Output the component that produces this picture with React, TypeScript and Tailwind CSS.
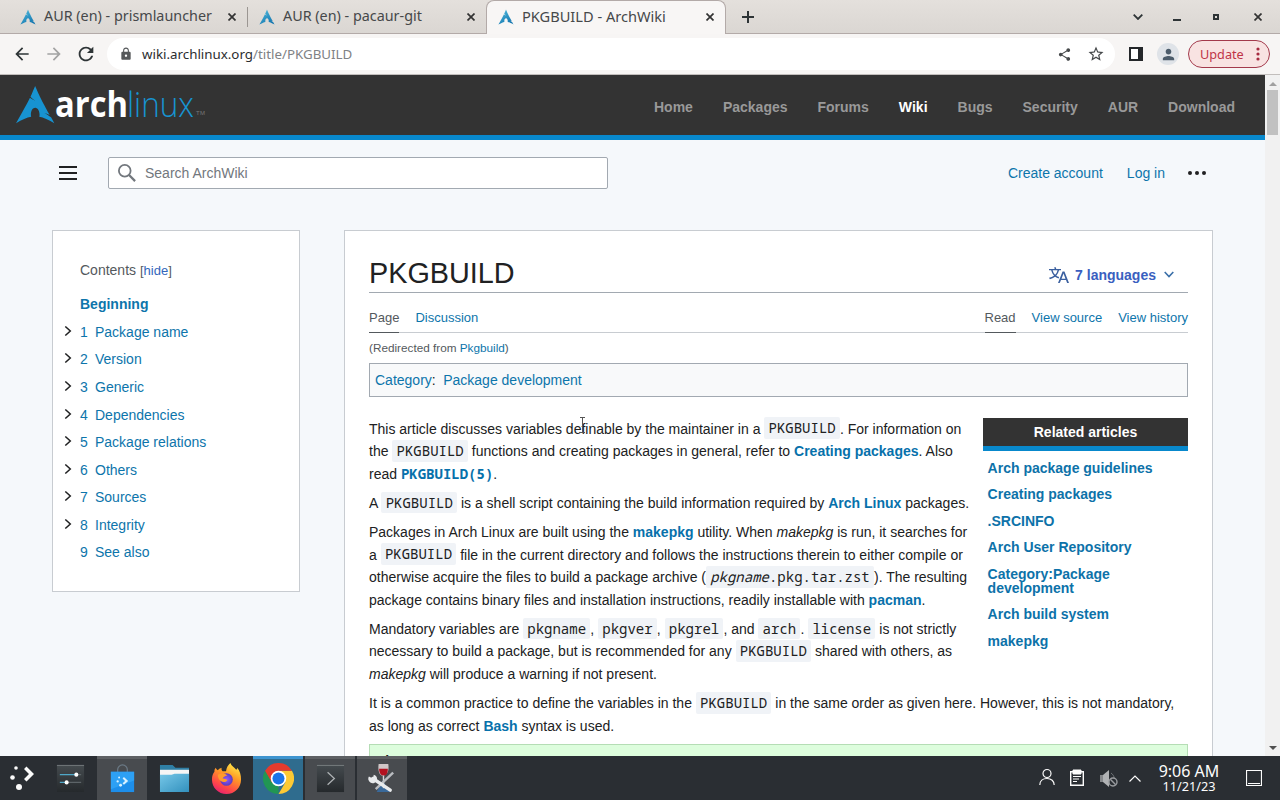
import type { ReactNode } from 'react';
import { MdArrowBack, MdArrowForward, MdLock, MdPerson, MdRefresh, MdShare, MdStarBorder } from 'react-icons/md';

const ARCH_MARK =
  'M11.39.605C10.376 3.092 9.764 4.72 8.635 7.132c.693.734 1.543 1.589 2.923 2.554-1.484-.61-2.496-1.224-3.252-1.86C6.86 10.842 4.596 15.138 0 23.395c3.612-2.085 6.412-3.37 9.021-3.862a6.61 6.61 0 01-.171-1.547l.003-.115c.058-2.315 1.261-4.095 2.687-3.973 1.426.12 2.534 2.096 2.478 4.409a6.52 6.52 0 01-.146 1.243c2.58.505 5.352 1.787 8.914 3.844-.702-1.293-1.33-2.459-1.929-3.57-.943-.73-1.926-1.682-3.933-2.713 1.38.359 2.367.772 3.137 1.234-6.09-11.334-6.582-12.84-8.67-17.74z';

const navItems = ['Home', 'Packages', 'Forums', 'Wiki', 'Bugs', 'Security', 'AUR', 'Download'];

const tocItems = [
  { title: 'Package name', expandable: true },
  { title: 'Version', expandable: true },
  { title: 'Generic', expandable: true },
  { title: 'Dependencies', expandable: true },
  { title: 'Package relations', expandable: true },
  { title: 'Others', expandable: true },
  { title: 'Sources', expandable: true },
  { title: 'Integrity', expandable: true },
  { title: 'See also', expandable: false },
];

const relatedArticles = [
  'Arch package guidelines',
  'Creating packages',
  '.SRCINFO',
  'Arch User Repository',
  'Category:Package development',
  'Arch build system',
  'makepkg',
];

function Favicon() {
  return (
    <svg viewBox="0 0 22.8 24" className="h-4 w-4 shrink-0">
      <defs>
        <linearGradient id="fav" x1="0" y1="0" x2="0.6" y2="1">
          <stop offset="0" stopColor="#55c0e0" />
          <stop offset="1" stopColor="#1577b0" />
        </linearGradient>
      </defs>
      <path d={ARCH_MARK} fill="url(#fav)" />
    </svg>
  );
}

function CloseIcon() {
  return (
    <svg viewBox="0 0 8 8" className="h-2 w-2 shrink-0">
      <path d="M.5.5l7 7M7.5.5l-7 7" stroke="#333" strokeWidth="1.7" fill="none" />
    </svg>
  );
}

function Tab({ title, active }: { title: string; active?: boolean }) {
  return (
    <>
      <Favicon />
      <span
        className={`mb-0.5 flex-1 whitespace-nowrap leading-5 text-[#46484a] ${active ? 'ml-2 text-[14.6px]' : 'ml-2 text-[14.35px]'}`}
      >
        {title}
      </span>
      <CloseIcon />
    </>
  );
}

function TabStrip() {
  return (
    <div className="flex h-[34px] shrink-0 bg-linear-to-b from-[#e4e0dc] to-[#dad6d2]">
      <div className="flex h-[34px] w-[247px] items-center border-b border-[#b3aaa8] pl-5 pr-[11px]">
        <Tab title="AUR (en) - prismlauncher" />
      </div>
      <div className="flex h-[34px] w-[239px] items-center border-b border-[#b3aaa8] pr-[11px]">
        <div className="mr-[11px] h-5 w-px bg-[#9b9692]" />
        <Tab title="AUR (en) - pacaur-git" />
      </div>
      <div className="flex h-[34px] w-[240px] items-center rounded-t-lg border border-b-0 border-[#b3aaa8] bg-[#f8f6f5] pb-px pl-[11px] pr-[11px]">
        <Tab title="PKGBUILD - ArchWiki" active />
      </div>
      <div className="flex h-[34px] flex-1 items-center border-b border-[#b3aaa8] pl-4 pr-[18px]">
        <svg viewBox="0 0 12 12" className="h-3 w-3">
          <path d="M6 0v12M0 6h12" stroke="#2e3436" strokeWidth="2" />
        </svg>
        <div className="flex-1" />
        <svg viewBox="0 0 10 6" className="h-1.5 w-2.5">
          <path d="M.7.7L5 5 9.3.7" stroke="#2e3436" strokeWidth="1.8" fill="none" />
        </svg>
        <div className="ml-[30px] mt-[6px] h-0.5 w-2 bg-[#2e3436]" />
        <div className="ml-8 h-1.5 w-1.5 border-2 border-[#2e3436]" />
        <div className="ml-[35px] flex">
          <CloseIcon />
        </div>
      </div>
    </div>
  );
}

function Toolbar() {
  return (
    <div className="flex h-[41px] shrink-0 items-center border-b border-[#c2bebc] bg-[#f7f5f4] pl-3 pr-[10px]">
      <MdArrowBack className="h-5 w-5 text-[#2e3436]" />
      <MdArrowForward className="ml-3 h-5 w-5 text-[#a3a3a3]" />
      <MdRefresh className="ml-[11px] h-[22px] w-[22px] text-[#2e3436]" />
      <div className="ml-[10px] flex h-8 w-[1008px] items-center rounded-full bg-white pl-[12px] pr-[10px]">
        <MdLock className="h-[14px] w-[14px] text-[#55585a]" />
        <span className="ml-[9px] flex-1 text-[13.33px] leading-5 text-[#808285]">
          <span className="text-[#2b2d2f]">wiki.archlinux.org</span>/title/PKGBUILD
        </span>
        <MdShare className="h-[15px] w-[15px] text-[#45484a]" />
        <MdStarBorder className="ml-[15px] h-[18px] w-[18px] text-[#45484a]" />
      </div>
      <svg viewBox="0 0 14 14" className="ml-[14px] h-[14px] w-[14px]">
        <path d="M1 1h12v12H1z" fill="#fff" stroke="#24272a" strokeWidth="2" />
        <path d="M9 0h5v14H9z" fill="#24272a" />
      </svg>
      <div className="ml-[14px] flex h-[22px] w-[22px] items-center justify-center rounded-full bg-[#dfe3e8]">
        <MdPerson className="h-[17px] w-[17px] text-[#4c5c6b]" />
      </div>
      <div className="ml-[9px] flex h-7 w-[82px] items-center rounded-full border border-[#a33a4c] bg-[#f8e3e2] pl-[11px] pr-[9px] text-[#bf3447]">
        <span className="flex-1 text-[12.7px] leading-5">Update</span>
        <svg viewBox="0 0 4 14" className="h-[14px] w-1 fill-[#a62a40]">
          <circle cx="2" cy="2" r="1.6" />
          <circle cx="2" cy="7" r="1.6" />
          <circle cx="2" cy="12" r="1.6" />
        </svg>
      </div>
    </div>
  );
}

function ArchLogo() {
  return (
    <svg viewBox="0 0 192 42" className="h-[42px] w-[192px] overflow-visible">
      <path d={ARCH_MARK} fill="#1793d1" transform="translate(0 1) scale(1.68 1.63)" />
      <g fontFamily="Open Sans, sans-serif" fontSize="35">
        <text x="39" y="32.5" fill="#fff" fontWeight="700" textLength="73" lengthAdjust="spacingAndGlyphs">arch</text>
        <text x="111" y="32.5" fill="#1793d1" fontWeight="300" textLength="67" lengthAdjust="spacingAndGlyphs">linux</text>
      </g>
      <text x="180" y="31" fill="#777" fontSize="6" fontFamily="Liberation Sans, sans-serif" textLength="9">TM</text>
    </svg>
  );
}

function ArchNavbar() {
  return (
    <div className="flex h-[65px] shrink-0 items-center border-b-5 border-[#0888cc] bg-[#333] pl-4 pr-[30px]">
      <ArchLogo />
      <nav className="ml-auto mt-1 flex gap-[30px] text-sm font-bold text-[#999]">
        {navItems.map((item) => (
          <a key={item} className={item === 'Wiki' ? 'text-white' : ''}>
            {item}
          </a>
        ))}
      </nav>
    </div>
  );
}

function WikiHeader() {
  return (
    <div className="mt-[17px] flex h-8 items-center pl-[59px] pr-[59px]">
      <div className="flex w-[18px] flex-col gap-1">
        <div className="h-0.5 bg-[#202122]" />
        <div className="h-0.5 bg-[#202122]" />
        <div className="h-0.5 bg-[#202122]" />
      </div>
      <div className="ml-[31px] flex h-8 w-[500px] items-center rounded-xs border border-[#a2a9b1] bg-white pl-[9px]">
        <svg viewBox="0 0 20 20" className="h-[18px] w-[18px]" fill="none" stroke="#72777d" strokeWidth="2">
          <circle cx="7.5" cy="7.5" r="6.5" />
          <path d="M12 12l7 7" strokeWidth="2.5" />
        </svg>
        <span className="ml-[9px] text-sm text-[#72777d]">Search ArchWiki</span>
      </div>
      <div className="ml-auto flex items-center text-sm text-[#0d75ab]">
        <a>Create account</a>
        <a className="ml-6">Log in</a>
        <svg viewBox="0 0 18 4" className="ml-[23px] h-1 w-[18px] fill-[#202122]">
          <circle cx="2" cy="2" r="2" />
          <circle cx="9" cy="2" r="2" />
          <circle cx="16" cy="2" r="2" />
        </svg>
      </div>
    </div>
  );
}

function Contents() {
  return (
    <aside className="h-[362px] w-[248px] shrink-0 border border-[#c8ccd1] bg-white pl-[11px] pt-[29px] text-sm text-[#0d75ab]">
      <div className="pl-4 text-[#54595d]">
        Contents <span className="text-[13px]">[<span className="text-[#3366bb]">hide</span>]</span>
      </div>
      <div className="mt-[13px] pl-4 font-bold leading-[21px]">Beginning</div>
      <ul className="mt-[3.5px]">
        {tocItems.map((item, i) => (
          <li key={item.title} className="flex h-[27.57px] items-center">
            <svg viewBox="0 0 8 10" className="mb-[2px] mr-2 h-2.5 w-2">
              {item.expandable && <path d="M1.3.5L6.300 5l-5 4.500" fill="none" stroke="#202122" strokeWidth="1.5" />}
            </svg>
            <span className="w-[15px]">{i + 1}</span>
            {item.title}
          </li>
        ))}
      </ul>
    </aside>
  );
}

function Code({ children }: { children: ReactNode }) {
  return (
    <code className="rounded-xs bg-[#f0f3f7] px-[4.2px] py-[1.4px] font-['Noto_Sans_Mono','DejaVu_Sans_Mono',monospace] text-[14px] leading-none">
      {children}
    </code>
  );
}

function Link({ children }: { children: ReactNode }) {
  return <a className="font-bold text-[#0771ab]">{children}</a>;
}

function RelatedArticles() {
  return (
    <div className="float-right ml-[10px] w-[205px] text-sm">
      <div className="h-[33px] border-b-5 border-[#0888cc] bg-[#333] text-center font-bold leading-7 text-white">
        Related articles
      </div>
      <ul className="flex flex-col gap-[12.55px] pl-[4.6px] pt-[9.9px] font-bold leading-[14px] text-[#0d72a9]">
        {relatedArticles.map((article) => (
          <li key={article}>{article}</li>
        ))}
      </ul>
    </div>
  );
}

function Article() {
  return (
    <main className="ml-11 h-[600px] w-[869px] shrink-0 border border-[#c8ccd1] bg-white px-6 pt-6 text-[#202122]">
      <div className="flex h-[38px] items-center border-b border-[#a2a9b1]">
        <h1 className="mb-0.5 text-[28.8px] leading-9">PKGBUILD</h1>
        <div className="ml-auto mr-[14px] mt-[3px] flex items-center text-sm font-bold text-[#3a5fc0]">
          <svg viewBox="0 0 20 20" className="mb-px mr-1.5 h-5 w-5 fill-[#3a5f9f]">
            <path d="M20 18h-1.440a.61.61 0 0 1-.4-.12.81.81 0 0 1-.23-.31L17 15h-5l-1 2.540a.77.77 0 0 1-.22.3.59.59 0 0 1-.4.14H9l4.550-11.470h1.890zm-3.530-4.310L14.890 9.500a11.620 11.620 0 0 1-.39-1.240q-.09.37-.19.69l-.19.56-1.580 4.190zm-6.300-1.580a13.430 13.430 0 0 1-2.910-1.410 11.460 11.460 0 0 0 2.810-5.370H12V4H7.310a4 4 0 0 0-.2-.56C6.870 2.790 6.600 2 6.600 2l-1.470.5s.4.89.6 1.500H0v1.330h2.150A11.230 11.230 0 0 0 5 10.700a17.190 17.190 0 0 1-5 2.100q.56.82.87 1.380a23.280 23.280 0 0 0 5.220-2.510 15.640 15.640 0 0 0 3.560 1.770zM3.630 5.330h4.910a8.110 8.110 0 0 1-2.450 4.450 9.110 9.110 0 0 1-2.460-4.450z" />
          </svg>
          7 languages
          <svg viewBox="0 0 10 7" className="mb-0.5 ml-2 h-[7px] w-2.5">
            <path d="M.7 1L5 5.500 9.300 1" fill="none" stroke="#3a6fa8" strokeWidth="1.600" />
          </svg>
        </div>
      </div>

      <div className="flex h-10 gap-4 border-b border-[#c8ccd1] text-[13px] leading-[49px] text-[#0d75ab]">
        <a className="h-10 border-b border-[#54595d] text-[#54595d]">Page</a>
        <a>Discussion</a>
        <a className="ml-auto h-10 border-b border-[#54595d] text-[#54595d]">Read</a>
        <a>View source</a>
        <a>View history</a>
      </div>
      <div className="mt-[6px] text-[11.76px] leading-[17px] text-[#54595d]">
        (Redirected from <a className="text-[#0d75ab]">Pkgbuild</a>)
      </div>
      <div className="mt-[7px] h-[34px] border border-[#a2a9b1] bg-[#f8f9fa] pl-[5px] text-sm leading-8">
        <a className="text-[#0d75ab]">Category</a>:<a className="ml-[7.5px] text-[#0d75ab]">Package development</a>
      </div>

      <div className="mt-[20.8px] text-sm leading-[22.4px]">
        <RelatedArticles />
        <p>
          This article discusses variables definable by the maintainer in a <Code>PKGBUILD</Code>. For information on the{' '}
          <Code>PKGBUILD</Code> functions and creating packages in general, refer to <Link>Creating packages</Link>. Also
          read <span className="font-['Noto_Sans_Mono','DejaVu_Sans_Mono',monospace] leading-none"><Link>PKGBUILD(5)</Link></span>.
        </p>
        <p className="mt-[7px]">
          A <Code>PKGBUILD</Code> is a shell script containing the build information required by <Link>Arch Linux</Link> packages.
        </p>
        <p className="mt-[7px]">
          Packages in Arch Linux are built using the <Link>makepkg</Link> utility. When <i>makepkg</i> is run, it searches for
          a <Code>PKGBUILD</Code> file in the current directory and follows the instructions therein to either compile or
          otherwise acquire the files to build a package archive (<Code><i>pkgname</i>.pkg.tar.zst</Code>). The resulting
          package contains binary files and installation instructions, readily installable with <Link>pacman</Link>.
        </p>
        <p className="mt-[7px]">
          Mandatory variables are <Code>pkgname</Code>, <Code>pkgver</Code>, <Code>pkgrel</Code>, and <Code>arch</Code>.{' '}
          <Code>license</Code> is not strictly necessary to build a package, but is recommended for any{' '}
          <Code>PKGBUILD</Code> shared with others, as <i>makepkg</i> will produce a warning if not present.
        </p>
        <p className="mt-[7px]">
          It is a common practice to define the variables in the <Code>PKGBUILD</Code> in the same order as given here.
          However, this is not mandatory, as long as correct <Link>Bash</Link> syntax is used.
        </p>
        <div className="mt-[7px] h-20 border border-[#b5ddb5] bg-[#ddfddd] px-[7px] pt-[5px] font-bold">Tip:</div>
      </div>
    </main>
  );
}

function Scrollbar() {
  return (
    <div className="flex w-[15px] shrink-0 flex-col items-center bg-[#f1f1f1]">
      <svg viewBox="0 0 8 4" className="mt-[7px] h-1 w-2">
        <path d="M0 4l4-4 4 4z" fill="#a0a0a0" />
      </svg>
      <div className="mt-1 h-[45px] w-[11px] bg-[#c1c1c1]" />
      <svg viewBox="0 0 8 4" className="mb-[6px] mt-auto h-1 w-2">
        <path d="M0 0l4 4 4-4z" fill="#505050" />
      </svg>
    </div>
  );
}

function TaskButton({ state, children }: { state?: 'open' | 'active'; children: ReactNode }) {
  const tone =
    state === 'active'
      ? 'border-t-3 border-[#3d94cf] bg-[#2f6c8e]'
      : state === 'open'
        ? 'border-t-3 border-[#5d6063] bg-[#484b4f]'
        : 'border-t-3 border-transparent';
  return (
    <div className={`mx-px flex h-11 w-[50px] items-center justify-center pb-[5px] ${tone}`}>
      <svg viewBox="0 0 32 32" className="mt-[3px] h-[31px] w-[31px]">
        {children}
      </svg>
    </div>
  );
}

function Taskbar() {
  return (
    <div className="flex h-11 shrink-0 items-center bg-[#2a2e33] text-[#fcfcfc]">
      <svg viewBox="0 0 28 28" className="ml-2 mr-2 h-7 w-7" fill="#fcfcfc">
        <circle cx="8" cy="4" r="1.8" />
        <circle cx="4.500" cy="13.500" r="2.3" />
        <circle cx="11" cy="23" r="3" />
        <path d="M18.500 2.500L26 10l-7.500 7.500-2.500-2.500 5-5-5-5z" />
      </svg>

      <TaskButton>
        <defs>
          <linearGradient id="dark" x1="0" y1="0" x2="0" y2="1">
            <stop offset="0" stopColor="#454b4f" />
            <stop offset="1" stopColor="#25292c" />
          </linearGradient>
        </defs>
        <path d="M2 2h28v28H2z" fill="url(#dark)" />
        <path d="M2 2.500h28" stroke="#72777a" />
        <path d="M5 12h17M5 20h7" stroke="#4fa8c8" strokeWidth="1.5" />
        <path d="M22 12h5M12 20h15" stroke="#5d6468" strokeWidth="1.5" />
        <circle cx="22" cy="12" r="2.1" fill="#fff" />
        <circle cx="12" cy="20" r="2.1" fill="#fff" />
      </TaskButton>
      <TaskButton state="open">
        <path d="M11 11V7a5 5 0 0110 0v4" fill="none" stroke="#6b7a86" strokeWidth="1.3" />
        <path d="M4 9h24v21H4z" fill="#1d8eea" />
        <path d="M4 9h24v9L4 27z" fill="#35a8f8" opacity=".7" />
        <g fill="#d9f1ff">
          <circle cx="12.5" cy="15" r="1" />
          <circle cx="11" cy="19" r="1.2" />
          <circle cx="14" cy="23" r="1.5" />
          <path d="M17.500 14.500l4.300 4-4.300 4-1.400-1.500 2.500-2.500-2.500-2.500z" />
        </g>
      </TaskButton>
      <TaskButton>
        <defs>
          <linearGradient id="folder" x1="0" y1="0" x2="1" y2="1">
            <stop offset="0" stopColor="#76c7e8" />
            <stop offset="1" stopColor="#3290bd" />
          </linearGradient>
        </defs>
        <path d="M1 2h13l3 3h14v9H1z" fill="#2f7fa5" />
        <path d="M1 7h30v8H1z" fill="#f5f5f5" />
        <path d="M1 12h12l3-1h15v19H1z" fill="url(#folder)" />
      </TaskButton>
      <TaskButton>
        <defs>
          <linearGradient id="fox" x1="0.8" y1="0" x2="0.3" y2="1">
            <stop offset="0" stopColor="#fff04a" />
            <stop offset="0.4" stopColor="#ff9a26" />
            <stop offset="0.75" stopColor="#ff4a47" />
            <stop offset="1" stopColor="#e8226f" />
          </linearGradient>
          <radialGradient id="globe">
            <stop offset="0" stopColor="#9059ff" />
            <stop offset="1" stopColor="#5b3bbd" />
          </radialGradient>
        </defs>
        <path d="M20 0c1 3 4 4.500 6 7 1-0.500 1-1.500 1-2 3 3 4 8 4 12 0 8.500-6.500 15-15 15S1 25.500 1 17c0-4 1-6 2.500-8 0-2 .5-3 1.500-4 .5 1.500 1 2 2 2.500C8.500 6 9.500 5.500 11 5c-.5 1.500 0 3 1 3.500h3.500C16 5 17.500 2 20 0z" fill="url(#fox)" />
        <circle cx="16" cy="17" r="6.5" fill="url(#globe)" />
        <path d="M7 12c4-2 8-1 10 1-2 0-4 1.500-5 3 1 0 3 .5 5 1.500-1 2-4 3-7 1-2-1.500-3-4-3-6.500z" fill="#ff9b2c" />
      </TaskButton>
      <TaskButton state="active">
        <path d="M16 16v16A16 16 0 012.140 8z" fill="#219653" />
        <path d="M16 8h13.860A16 16 0 0116 32l7-12z" fill="#fcc934" />
        <path d="M2.140 8A16 16 0 0129.860 8H16L9.100 20z" fill="#e33b2e" />
        <circle cx="16" cy="16" r="8" fill="#fff" />
        <circle cx="16" cy="16" r="6.2" fill="#1a73e8" />
      </TaskButton>
      <TaskButton state="open">
        <path d="M2 2h28v28H2z" fill="url(#dark)" />
        <path d="M2 2.500h28" stroke="#777c7f" />
        <path d="M13 9.500l7 6.500-7 6.500" fill="none" stroke="#aeb2b4" strokeWidth="1.3" />
      </TaskButton>
      <TaskButton state="open">
        <path d="M10 30l6-12 8 12z" fill="#39699a" />
        <path d="M12 1h10c1 7-1 11-5 12s-6-5-5-12z" fill="#e8dcdc" opacity=".85" />
        <path d="M12.500 6h9c0 5-1.500 7-4.500 7s-4.500-3-4.500-7z" fill="#b31220" />
        <path d="M17 13v13" stroke="#d8d8d8" strokeWidth="1.5" />
        <path d="M27 10L9 27" stroke="#b9bcc0" strokeWidth="2.5" />
        <path d="M6 16l18 12" stroke="#e8eaec" strokeWidth="3.5" strokeLinecap="round" />
        <path d="M2 14l4 2 1-4a4.500 4.500 0 11-5 2z" fill="#e8eaec" />
      </TaskButton>

      <svg viewBox="0 0 16 18" className="mb-0.5 ml-auto h-[18px] w-4" fill="none" stroke="#fcfcfc" strokeWidth="1.2">
        <circle cx="8" cy="5.5" r="4" />
        <path d="M.8 17c0-4 3-6.500 7.200-6.500s7.200 2.500 7.200 6.500" />
      </svg>
      <svg viewBox="0 0 14 17" className="mb-px ml-[15px] h-[17px] w-[14px]" fill="none" stroke="#fcfcfc">
        <path d="M.7 2.700h12.600v13.600H.7z" strokeWidth="1.4" />
        <path d="M3 1h8v4H3z" fill="#fcfcfc" />
        <path d="M3 7.500h8M3 10h6M3 12.500h4" strokeWidth="1.2" />
      </svg>
      <svg viewBox="0 0 18 17" className="ml-4 h-[17px] w-[18px]">
        <path d="M0 5h3v7H0z" fill="#85888b" />
        <path d="M3 5l6-5v17l-6-5z" fill="#b0b2b4" />
        <path d="M11 3c2 1.500 3 3 3 5" stroke="#6f7377" fill="none" />
        <circle cx="13" cy="12" r="4" fill="#2a2e33" stroke="#999c9f" strokeWidth="1.4" />
        <path d="M10.300 9.300l5.400 5.400" stroke="#999c9f" strokeWidth="1.4" />
      </svg>
      <svg viewBox="0 0 12 7" className="ml-[11px] h-[7px] w-3">
        <path d="M.5 6.500L6 1l5.500 5.500" fill="none" stroke="#fcfcfc" strokeWidth="1.2" />
      </svg>
      <div className="ml-[14px] flex w-[68px] flex-col items-center whitespace-nowrap">
        <span className="text-[16px] leading-[17px]">9:06 AM</span>
        <span className="text-[12.7px] leading-[13px]">11/21/23</span>
      </div>
      <svg viewBox="0 0 16 16" className="ml-[23px] mr-[18px] h-4 w-4" fill="none" stroke="#fcfcfc">
        <path d="M.5.5h15v15H.5zM2 13.500h12" strokeWidth="1.2" />
      </svg>
    </div>
  );
}

export default function App() {
  return (
    <div className="relative flex h-[800px] w-[1280px] flex-col overflow-hidden font-['Noto_Sans',sans-serif]">
      <TabStrip />
      <Toolbar />
      <div className="flex h-[681px] shrink-0 overflow-hidden font-['Liberation_Sans',Arial,sans-serif]">
        <div className="h-[681px] w-[1265px] overflow-hidden bg-[#f5f8fb]">
          <ArchNavbar />
          <WikiHeader />
          <div className="mt-[41px] flex items-start pl-[52px]">
            <Contents />
            <Article />
          </div>
        </div>
        <Scrollbar />
      </div>
      <Taskbar />

      {/* text cursor */}
      <svg viewBox="0 0 7 16" className="absolute left-[579px] top-[417px] h-4 w-[7px]" fill="none" stroke="#555">
        <path d="M1 .5h5M1 15.500h5M3.500 1v14" />
      </svg>
    </div>
  );
}
